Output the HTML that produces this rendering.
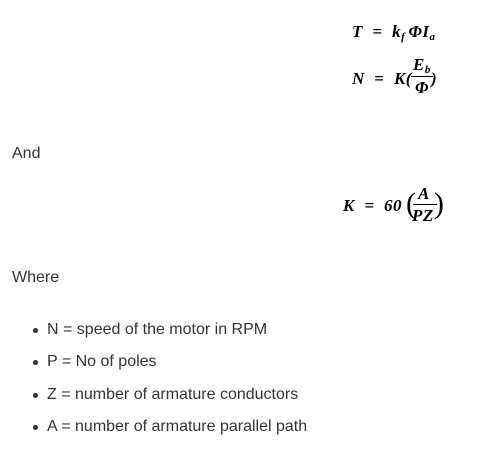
<!DOCTYPE html>
<html><head><meta charset="utf-8"><style>
body{margin:0;width:478px;height:451px;background:#fff;position:relative;overflow:hidden;font-family:"Liberation Sans",sans-serif;color:#333;font-size:16px}
.t{position:absolute;white-space:nowrap;line-height:20px}
.m{position:absolute;white-space:nowrap;font-family:"Liberation Serif",serif;font-weight:bold;font-style:italic;color:#000;font-size:17px;line-height:18px;letter-spacing:0.5px}
.b{position:absolute;width:5px;height:5px;border-radius:50%;background:#333}
sub{font-size:11px;vertical-align:-3px}
</style></head><body>
<div class="m" style="left:352px;top:23px">T&nbsp;&nbsp;=&nbsp;&nbsp;k<sub>f&nbsp;</sub>ΦI<sub>a</sub></div>
<div class="m" style="left:352px;top:70px">N&nbsp;&nbsp;=&nbsp;&nbsp;K(</div>
<div class="m" style="left:413px;top:56px">E<sub>b</sub></div>
<div style="position:absolute;left:411px;top:76px;width:22px;height:1px;background:#000"></div>
<div class="m" style="left:415px;top:79px">Φ</div>
<div class="m" style="left:431px;top:70px">)</div>
<div class="t" style="left:12px;top:144px">And</div>
<div class="m" style="left:343px;top:197px">K&nbsp;&nbsp;=&nbsp;&nbsp;60</div>
<div class="m" style="left:406px;top:188px;font-size:30px;font-weight:normal;font-style:normal;line-height:32px">(</div>
<div class="m" style="left:418px;top:185px">A</div>
<div style="position:absolute;left:413px;top:204px;width:24px;height:1px;background:#000"></div>
<div class="m" style="left:412px;top:207px">PZ</div>
<div class="m" style="left:434px;top:188px;font-size:30px;font-weight:normal;font-style:normal;line-height:32px">)</div>
<div class="t" style="left:12px;top:268px">Where</div>
<div class="b" style="left:33px;top:328px"></div><div class="t" style="left:47px;top:320px">N = speed of the motor in RPM</div>
<div class="b" style="left:33px;top:360px"></div><div class="t" style="left:47px;top:352px">P = No of poles</div>
<div class="b" style="left:33px;top:393px"></div><div class="t" style="left:47px;top:385px">Z = number of armature conductors</div>
<div class="b" style="left:33px;top:425px"></div><div class="t" style="left:47px;top:417px">A = number of armature parallel path</div>
</body></html>
